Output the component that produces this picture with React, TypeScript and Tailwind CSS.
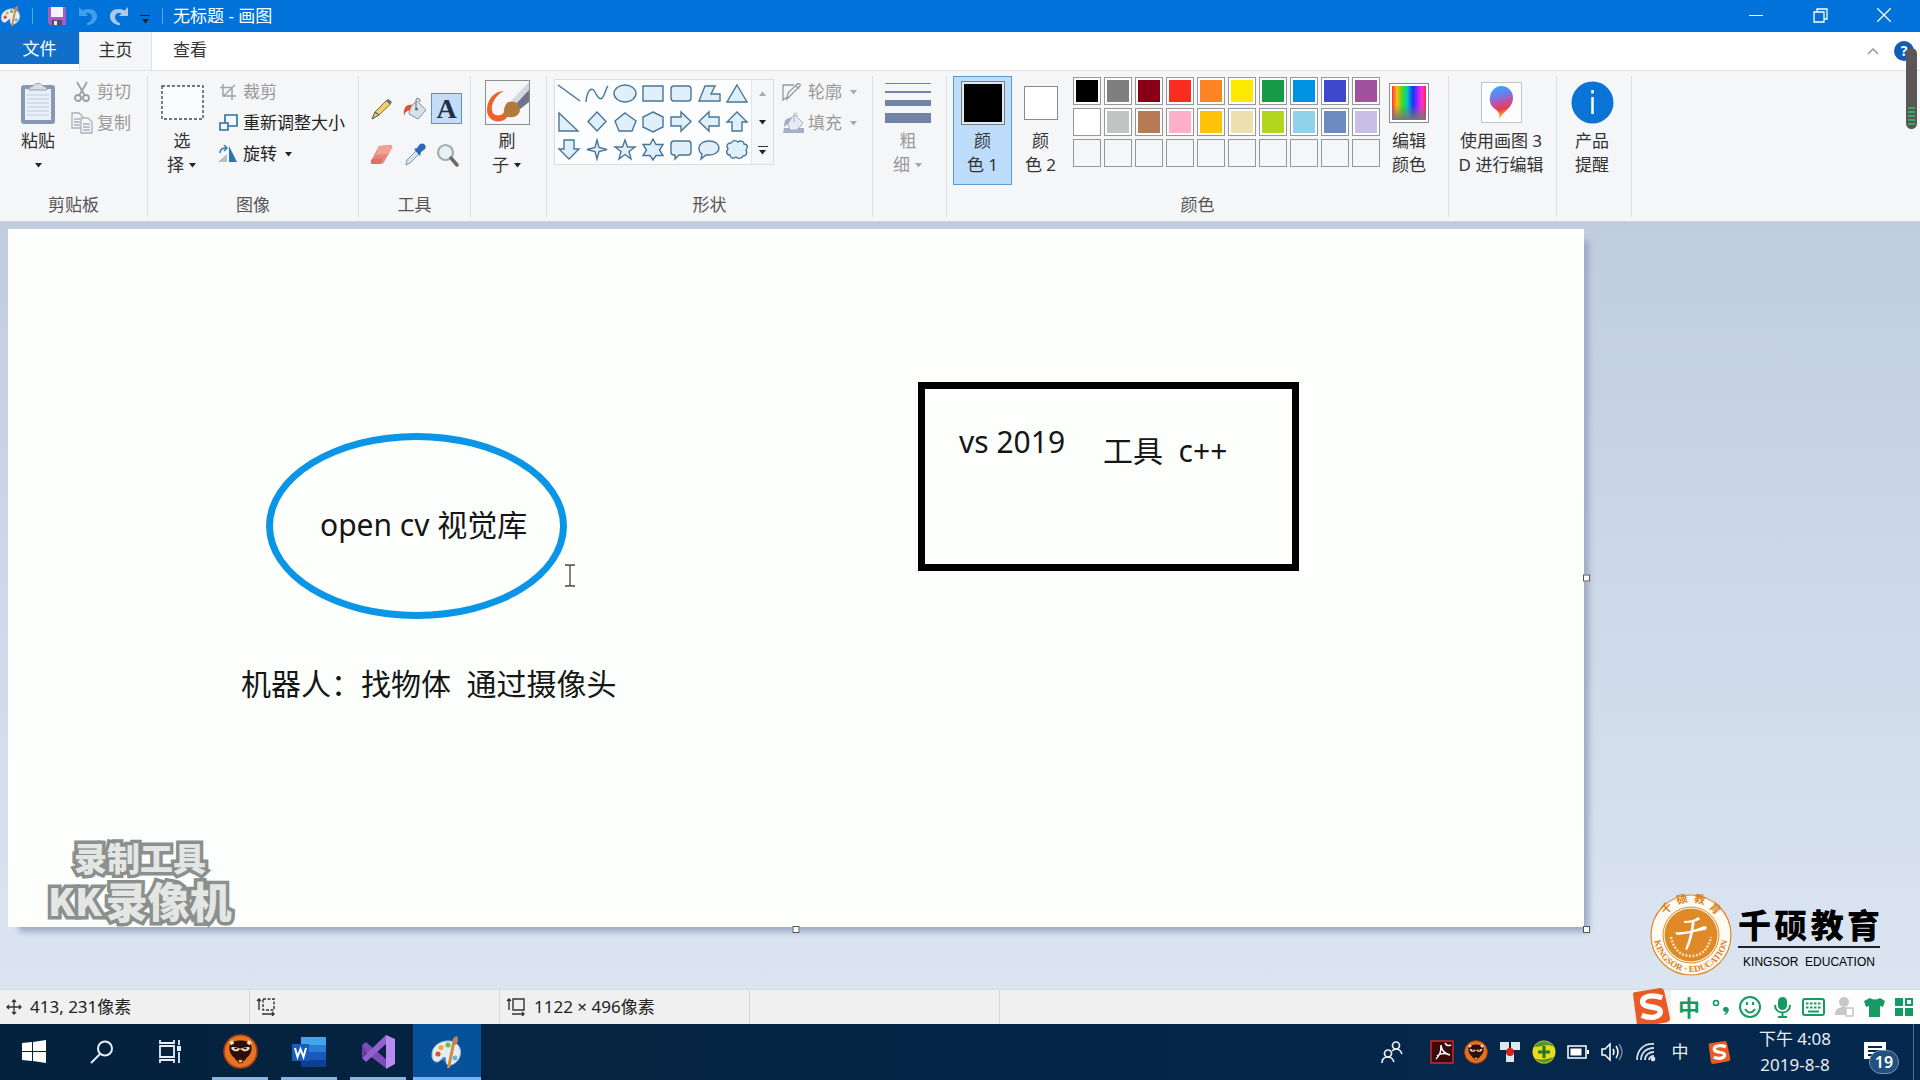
import type { ReactNode } from "react";

const PALETTE = [
  "bg-black", "bg-[#7f7f7f]", "bg-[#880015]", "bg-[#f92c20]", "bg-[#ff8426]", "bg-[#fde800]", "bg-[#169a48]", "bg-[#0092e2]", "bg-[#3f48cc]", "bg-[#a1529f]",
  "bg-white", "bg-[#c1c4c3]", "bg-[#b87a56]", "bg-[#ffb0c8]", "bg-[#ffc20a]", "bg-[#efe0b0]", "bg-[#b2d61e]", "bg-[#8fd2ea]", "bg-[#6c8cc0]", "bg-[#c8bfe7]",
];

function Caret({ light = false }: { light?: boolean }) {
  return (
    <svg width="9" height="6" viewBox="0 0 9 6" className={light ? "text-[#a9a9a9]" : "text-[#222]"} aria-hidden="true">
      <path d="M1 1h7L4.500 5.500Z" fill="currentColor" />
    </svg>
  );
}

function Group({ label, className, children }: { label?: string; className: string; children: ReactNode }) {
  return (
    <section aria-label={label} className={`flex shrink-0 flex-col border-r border-[#dcdfe3] ${className}`}>
      <div className="flex flex-1">{children}</div>
      {label && <div className="h-6 text-center leading-6 text-[#555]">{label}</div>}
    </section>
  );
}

function BigButton({ icon, lines, className, caret, muted, active }: { icon: ReactNode; lines: [string, string]; className: string; caret?: boolean; muted?: boolean; active?: boolean }) {
  return (
    <button
      type="button"
      className={`flex h-[109px] shrink-0 flex-col items-center outline-1 -outline-offset-1 ${active ? "bg-[#bddcfc] outline-[#5b9bd0]" : "outline-transparent"} ${muted ? "text-[#999]" : "text-[#333]"} ${className}`}
    >
      <span className="flex h-[53px] items-center">{icon}</span>
      <span className="h-6 leading-6 whitespace-nowrap">{lines[0]}</span>
      <span className="flex h-6 items-center gap-1 leading-6 whitespace-nowrap">
        {lines[1]}
        {caret && <Caret light={muted} />}
      </span>
    </button>
  );
}

function RowButton({ icon, label, caret, muted }: { icon: ReactNode; label: string; caret?: boolean; muted?: boolean }) {
  return (
    <button type="button" className={`flex h-[31px] items-center gap-[3px] whitespace-nowrap ${muted ? "text-[#999]" : "text-[#222]"}`}>
      <span className="flex w-6 justify-center">{icon}</span>
      {label}
      {caret && <span className="ml-1"><Caret light={muted} /></span>}
    </button>
  );
}

function PaintLogo({ size }: { size: number }) {
  return (
    <svg width={size} height={size} viewBox="0 0 34 34" aria-hidden="true">
      <path d="M2 21C1 11 11 5 20 6c9 1 12 9 10 15-2 7-9 10-12 9-3-1-1-5-4-6-3-1-4 3-7 3-3 0-5-3-5-6Z" fill="#e4eef2" stroke="#9db7c8" />
      <circle cx="8" cy="19" r="2.600" fill="#e2502f" />
      <circle cx="11" cy="12.500" r="2.600" fill="#f4a63a" />
      <circle cx="18" cy="10" r="2.500" fill="#68b949" />
      <circle cx="14" cy="24" r="2" fill="#3b7dd0" />
      <circle cx="25" cy="23" r="2.400" fill="#63b6d8" />
      <path d="M22 8 25 9 20 33 17 33Z" fill="#d58a45" />
      <path d="M22 9c0-4 1-7 5-8 2 3 1 6-1 9Z" fill="#b98561" />
    </svg>
  );
}

function SaveIcon() {
  return (
    <svg width="20" height="20" viewBox="0 0 20 20" aria-hidden="true">
      <path d="M1 1h18v18H3l-2-2Z" fill="#a35fc0" />
      <path d="M4 1h12v10H4Z" fill="#f6f2fb" />
      <path d="M5 14h10v5H5Z" fill="#5a4966" />
      <path d="M7 15h3v4H7Z" fill="#efe6f2" />
    </svg>
  );
}

function UndoIcon({ flip }: { flip?: boolean }) {
  return (
    <svg width="20" height="20" viewBox="0 0 20 20" className={flip ? "-scale-x-100" : ""} aria-hidden="true">
      <path d="M1 1v9h9L7.500 7.500c4-1.500 6.500 .5 6.500 3.500 0 3-2 5-5 6.300v2c6-.5 10-4 10-9C19 4 12 1 4.500 4.500Z" fill={flip ? "#a9cbe9" : "#3fa0ea"} />
    </svg>
  );
}

function ClipboardIcon() {
  return (
    <svg width="36" height="44" viewBox="0 0 36 44" aria-hidden="true">
      <rect x="1" y="4" width="34" height="39" rx="3" fill="#8797b4" />
      <path d="M5 8h26v31H5Z" fill="#e9f0fa" />
      <path d="M7 14h22M7 18h22M7 22h22M7 26h22M7 30h22M7 34h22" stroke="#bccbe0" strokeWidth="1.200" />
      <path d="M9 9c0-4 4-3 5-5s7-2 8 0 5 1 5 5Z" fill="#d8dde6" stroke="#98a3b4" />
    </svg>
  );
}

function ScissorsIcon() {
  return (
    <svg width="18" height="22" viewBox="0 0 18 22" fill="none" stroke="#9aa0a8" strokeWidth="1.800" aria-hidden="true">
      <path d="M4 1 11.500 14M14 1 6.500 14" />
      <circle cx="5" cy="17" r="3" />
      <circle cx="13" cy="17" r="3" />
    </svg>
  );
}

function CopyIcon() {
  return (
    <svg width="22" height="22" viewBox="0 0 22 22" fill="#f4f6f9" stroke="#a9b1bd" strokeWidth="1.300" aria-hidden="true">
      <path d="M1 1h7l4 4v11H1Z" />
      <path d="M3 7h6M3 10h6M3 13h6" />
      <path d="M10 6h7l4 4v11H10Z" />
      <path d="M12 12h7M12 15h7M12 18h7" />
    </svg>
  );
}

function CropIcon() {
  return (
    <svg width="18" height="18" viewBox="0 0 18 18" fill="none" stroke="#a3a3a3" strokeWidth="1.500" aria-hidden="true">
      <path d="M4 1v12h13M1 4.500h12V17M4.500 13 16 2" />
    </svg>
  );
}

function ResizeIcon() {
  return (
    <svg width="19" height="18" viewBox="0 0 19 18" fill="#f5f9fc" stroke="#2c6f9f" strokeWidth="1.600" aria-hidden="true">
      <path d="M6 1h12v11H6Z" />
      <path d="M1 9h8v7H1Z" />
    </svg>
  );
}

function RotateIcon() {
  return (
    <svg width="20" height="18" viewBox="0 0 20 18" aria-hidden="true">
      <path d="M11 1v16h8Z" fill="#2b78a8" />
      <path d="M9 9v8H0Z" fill="#b8bfc4" />
      <path d="M2 8c0-4 3-5 6-5M6 0l3 3-3 3" fill="none" stroke="#2f7ebb" strokeWidth="1.500" />
    </svg>
  );
}

function PencilIcon() {
  return (
    <svg width="24" height="24" viewBox="0 0 24 24" aria-hidden="true">
      <path d="M5 15 17 3l4 3.500L9 18Z" fill="#eed36a" stroke="#7d6a34" />
      <path d="m5 15-3 7 7-4Z" fill="#d9c6a4" stroke="#59503f" />
      <path d="m16 4 2-2 4 3-2 2.500Z" fill="#6c6c6c" />
    </svg>
  );
}

function BucketIcon() {
  return (
    <svg width="26" height="24" viewBox="0 0 26 24" aria-hidden="true">
      <path d="M8 10 15 4l9 9-8 9-9-5Z" fill="#d5e2ea" stroke="#7f93a2" />
      <path d="M14 12V4c0-4 4-3 4 1" fill="none" stroke="#7c8790" strokeWidth="1.200" />
      <circle cx="14.500" cy="12" r="1.500" fill="#667" />
      <path d="M10 8C4 7 1 11 2 19c1-4 3-5 6-6Z" fill="#e0512f" />
    </svg>
  );
}

function EraserIcon() {
  return (
    <svg width="25" height="22" viewBox="0 0 25 22" aria-hidden="true">
      <path d="M10 2 22 1q2 1 1 3L15 18q-1 2-3 2H3q-2-1-1-3Z" fill="#e98478" />
      <path d="M10 2 22 1q2 1 1 3l-4 6-12 1Z" fill="#f2a196" />
      <path d="M3 15 14 14l-3 6H3q-2-1-1-3Z" fill="#df6f63" />
    </svg>
  );
}

function DropperIcon() {
  return (
    <svg width="24" height="24" viewBox="0 0 24 24" aria-hidden="true">
      <path d="m3 22 1-5 9-9 3 3-9 9Z" fill="#d6e4ee" stroke="#8398a8" />
      <path d="m11 6 3-1 3-4c4-2 7 2 5 5l-4 3-1 4Z" fill="#2a68b5" />
    </svg>
  );
}

function ZoomIcon() {
  return (
    <svg width="24" height="24" viewBox="0 0 24 24" aria-hidden="true">
      <circle cx="9.500" cy="9.500" r="7.500" fill="#e7f0f5" stroke="#a3abb0" strokeWidth="2.200" />
      <path d="m15 15 6 7" stroke="#6f6a66" strokeWidth="3.500" strokeLinecap="round" />
    </svg>
  );
}

function BrushIcon() {
  return (
    <svg width="45" height="45" viewBox="0 0 45 45" aria-hidden="true">
      <rect x="0.500" y="0.500" width="44" height="44" fill="#f5f7f8" stroke="#8d8d8d" />
      <path d="M19 11C9 11 2 20 2 30c0 8 7 13 14 11 5-1 7-4 7-8l-3-2c-2 4-7 6-11 3-5-4-1-18 10-23Z" fill="#ee6127" />
      <path d="M44 4v18L34 30l-7-8Z" fill="#6d7390" />
      <path d="M44 2v8L30 25l-4-4Z" fill="#d3d7e0" />
      <path d="M22 23c5-4 13 0 13 6s-5 9-11 8c-4 0-6-3-5-6 0-3 1-6 3-8Z" fill="#b27a3a" />
    </svg>
  );
}

const SHAPES: string[] = [
  "M2 3 24 19",
  "M2 20C3 8 8 4 11 10s6 10 9 3 2-7 4-9",
  "M13 3c6 0 11 4 11 8.500S19 20 13 20 2 16 2 11.500 7 3 13 3Z",
  "M3 4h20v15H3Z",
  "M6 4h14q3 0 3 3v9q0 3-3 3H6q-3 0-3-3V7q0-3 3-3Z",
  "M3 19 9 4h10l-4 8h9v7Z",
  "M13 3 23 20H3Z",
  "M3 3 22 21H3Z",
  "M13 2 22 11.500 13 21 4 11.500Z",
  "M13 3 24 11l-4 10H7L3 11Z",
  "M13 2 23 7v10l-10 5-10-5V7Z",
  "M3 7h10V2l10 9.500L13 21v-5H3Z",
  "M23 7H13V2L3 11.500 13 21v-5h10Z",
  "M8 21V12H3L13 2l10 10h-5v9Z",
  "M8 2v9H3l10 10 10-10h-5V2Z",
  "M13 2l2 7.500 8 2-8 2L13 21l-2-7.500-8-2 8-2Z",
  "M13 2l2.500 7H23l-6 4.500 2 7.500-6-4.500L7 21l2-7.500L3 9h7.500Z",
  "M13 1l3 5.500h7L19.500 12l3.500 5.500h-7L13 22l-3-4.500H3L6.500 12 3 6.500h7Z",
  "M6 3h14q3 0 3 3v8q0 3-3 3H11l-4 4v-4H6q-3 0-3-3V6q0-3 3-3Z",
  "M13 3c6 0 10 3 10 7s-4 7-10 7H10l-5 4 1-5c-2-1-3-3-3-6 0-4 4-7 10-7Z",
  "M7 5c2-4 6-2 7-1 2-2 6-1 6 2 4 0 4 4 2 6 2 3 0 6-3 6-1 3-5 3-7 1-3 2-6 1-6-2-4 0-4-4-2-6-2-3-1-6 3-6Z",
];

function WordIcon() {
  return (
    <svg width="34" height="32" viewBox="0 0 34 32" aria-hidden="true">
      <path d="M9 1h25v8H9Z" fill="#41a5ee" />
      <path d="M9 9h25v7H9Z" fill="#2b7cd3" />
      <path d="M9 16h25v8H9Z" fill="#185abd" />
      <path d="M9 24h25v7H9Z" fill="#103f91" />
      <path d="M0 8h17v17H0Z" fill="#185abd" />
      <path d="m3 12 2.500 9L8.500 13l3 8L14 12" fill="none" stroke="#fff" strokeWidth="2" />
    </svg>
  );
}

function VisualStudioIcon() {
  return (
    <svg width="35" height="35" viewBox="0 0 35 35" aria-hidden="true">
      <path d="m1 11 4-3 21 18v9L5 19Z" fill="#7d4bb6" />
      <path d="M1 24V11l5 7Z" fill="#6b3fa3" />
      <path d="M1 24 25 1v9L5 28Z" fill="#9460cf" />
      <path d="m25 1 9 4v25l-9 5Z" fill="#b78cf0" />
    </svg>
  );
}

function RecorderFace({ size }: { size: number }) {
  return (
    <svg width={size} height={size} viewBox="0 0 34 34" aria-hidden="true">
      <circle cx="17" cy="17" r="16" fill="#e5731f" stroke="#a83f10" strokeWidth="1.500" />
      <path d="M7 10C10 5 24 5 27 10c2 5 0 10-4 13l-2 3h-8l-2-3c-4-3-6-8-4-13Z" fill="#2a1008" />
      <path d="M6 8l3-2 2 3-3 2ZM28 8l-3-2-2 3 3 2Z" fill="#f4e4d4" />
      <path d="M8 13c3-1 6 0 8 1h2c2-1 5-2 8-1 0 4-7 5-8 2h-2c-1 3-8 2-8-2Z" fill="#f4d9bd" />
      <path d="M11 14h3M20 14h3" stroke="#2a1008" strokeWidth="1.500" />
      <path d="M15 25h4v3h-4Z" fill="#f0c7a0" stroke="#5a230c" />
    </svg>
  );
}

function SogouLogo({ size }: { size: number }) {
  return (
    <svg width={size} height={size} viewBox="0 0 40 40" aria-hidden="true">
      <path d="M1 6Q1 4 4 4L29 0Q32 0 33 3L39 31Q39 34 36 35L9 40Q6 40 5 37Z" fill="#ea5a24" />
      <path d="M31 10C19 6 10 9 11 15s18 3 18 9-10 8-19 4" fill="none" stroke="#fff" strokeWidth="5.500" />
    </svg>
  );
}

function RingLogo() {
  return (
    <svg width="82" height="82" viewBox="0 0 82 82" role="img" aria-label="Kingsor Education">
      <circle cx="41" cy="41" r="40" fill="#fffaf2" stroke="#dd8a2b" strokeWidth="1.200" />
      <circle cx="41" cy="41" r="28" fill="none" stroke="#dd8a2b" strokeWidth="1" />
      <circle cx="41" cy="41" r="26.500" fill="#df8a26" />
      <path id="ring-top" d="M11 38a30 30 0 0 1 60 0" fill="none" />
      <path id="ring-bottom" d="M4 41a37 37 0 0 0 74 0" fill="none" />
      <text fontSize="11" fontWeight="700" fill="#d98020" className="font-['Noto_Sans_CJK_SC',sans-serif]">
        <textPath href="#ring-top" startOffset="50%" textAnchor="middle" className="whitespace-pre">千  硕  教  育</textPath>
      </text>
      <text fontSize="9" fontWeight="700" fill="#d98020" className="font-['Liberation_Serif',serif]">
        <textPath href="#ring-bottom" startOffset="50%" textAnchor="middle">KINGSOR · EDUCATION</textPath>
      </text>
      <path d="M21 43c3 14 11 19 20 19s17-5 20-19" fill="none" stroke="#fbe3bf" strokeWidth="2.500" strokeDasharray="2 1.500" />
      <path d="M34 27c6 0 10-1 14-4 3 1 2 3-1 4-3 1-8 2-13 2ZM25 38c9 1 20-2 29-6 4 0 3 3 1 4-9 1-20 5-28 5ZM42 27c3 1 3 3 2 5-1 8-3 17-7 24-2 0-2-1-1-3 3-8 5-16 6-26Z" fill="#fff" />
    </svg>
  );
}

function ShapeGallery() {
  return (
    <div className="mt-[3px] flex h-[86px] border border-[#d9dde2]">
      <div className="grid grid-cols-7 bg-[#fbfdff]">
        {SHAPES.map((d, i) => (
          <button key={d} type="button" aria-label={`形状 ${i + 1}`} className="flex h-7 w-7 items-center justify-center">
            <svg width="26" height="24" viewBox="0 0 26 24" fill={i < 2 ? "none" : "#dff0fb"} stroke="#4b7596" strokeWidth="1.400" aria-hidden="true">
              <path d={d} />
            </svg>
          </button>
        ))}
      </div>
      <div className="flex w-[22px] flex-col border-l border-[#e1e4e8] text-[#444]">
        <button type="button" aria-label="向上" className="flex h-7 items-center justify-center"><span className="rotate-180"><Caret light /></span></button>
        <button type="button" aria-label="向下" className="flex h-7 items-center justify-center"><Caret /></button>
        <button type="button" aria-label="更多" className="flex h-7 flex-col items-center justify-center gap-0.5"><span className="h-px w-2.5 bg-[#333]" /><Caret /></button>
      </div>
    </div>
  );
}

function Ribbon() {
  return (
    <div className="flex h-[151px] items-stretch border-t border-[#dfe2e5] bg-[#f5f6f7] pt-[5px] pb-1">
      <Group label="剪贴板" className="w-[148px]">
        <button type="button" className="flex h-[109px] w-[76px] flex-col items-center text-[#333]">
          <span className="flex h-[53px] items-center"><ClipboardIcon /></span>
          <span className="h-6 leading-6">粘贴</span>
          <span className="flex h-6 items-center"><Caret /></span>
        </button>
        <div className="-ml-1.5">
          <RowButton muted icon={<ScissorsIcon />} label="剪切" />
          <RowButton muted icon={<CopyIcon />} label="复制" />
        </div>
      </Group>
      <Group label="图像" className="w-[211px]">
        <BigButton
          className="w-[68px]"
          lines={["选", "择"]}
          caret
          icon={<svg width="43" height="35" viewBox="0 0 43 35" aria-hidden="true"><rect x="1" y="1" width="41" height="33" fill="#fafcfd" stroke="#3c4c5a" strokeWidth="1.400" strokeDasharray="3 2" /></svg>}
        />
        <div>
          <RowButton muted icon={<CropIcon />} label="裁剪" />
          <RowButton icon={<ResizeIcon />} label="重新调整大小" />
          <RowButton icon={<RotateIcon />} label="旋转" caret />
        </div>
      </Group>
      <Group label="工具" className="w-28">
        <div className="ml-1.5 mt-[17px] grid h-[77px] grid-cols-[33px_33px_33px] content-between">
          <button type="button" aria-label="铅笔" className="flex h-[31px] items-center justify-center"><PencilIcon /></button>
          <button type="button" aria-label="填充颜色" className="flex h-[31px] items-center justify-center"><BucketIcon /></button>
          <button type="button" aria-label="文本" className="flex h-[31px] w-[31px] items-center justify-center border border-[#5a93d0] bg-[#c4dcf6] font-['Liberation_Serif',serif] text-[28px] leading-none font-bold text-[#1d3049]">A</button>
          <button type="button" aria-label="橡皮擦" className="flex h-[31px] items-center justify-center"><EraserIcon /></button>
          <button type="button" aria-label="颜色选取器" className="flex h-[31px] items-center justify-center"><DropperIcon /></button>
          <button type="button" aria-label="放大镜" className="flex h-[31px] items-center justify-center"><ZoomIcon /></button>
        </div>
      </Group>
      <Group className="w-[76px]">
        <BigButton className="w-[72px]" lines={["刷", "子"]} caret icon={<BrushIcon />} />
      </Group>
      <Group label="形状" className="w-[326px]">
        <div className="flex gap-[7px] pl-[7px]">
          <ShapeGallery />
          <div>
            <RowButton muted caret label="轮廓" icon={<svg width="22" height="20" viewBox="0 0 22 20" fill="none" stroke="#989898" strokeWidth="1.300" aria-hidden="true"><path d="M12 3H1v15L5 15M18 4 9 13l-4 4 1-6 9-9q4-1 3 2M14 4l3 3" /></svg>} />
            <RowButton muted caret label="填充" icon={<svg width="23" height="22" viewBox="0 0 23 22" aria-hidden="true"><path d="M2 16h20v5H1Z" fill="#a3afc4" /><path d="M5 9 13 3l8 8-6 7H8Z" fill="#e6ebf2" stroke="#a6b1c3" /><path d="M12 10V3c0-3 3-3 3 1" fill="none" stroke="#a6b1c3" /><path d="M10 6C4 5 2 9 2 15l5-4Z" fill="#a3afc4" /></svg>} />
          </div>
        </div>
      </Group>
      <Group className="w-[74px]">
        <BigButton
          muted
          caret
          className="w-[70px]"
          lines={["粗", "细"]}
          icon={
            <span className="flex w-[46px] flex-col gap-[7px]">
              <span className="h-px bg-[#7283a6]" />
              <span className="h-[2px] bg-[#7283a6]" />
              <span className="h-[6px] bg-[#7283a6]" />
              <span className="h-[10px] bg-[#7283a6]" />
            </span>
          }
        />
      </Group>
      <Group label="颜色" className="w-[502px]">
        <BigButton active className="ml-1.5 w-[59px]" lines={["颜", "色 1"]} icon={<span className="block size-[44px] border border-[#7c7c7c] bg-black outline-2 -outline-offset-3 outline-[#dfe9f3]" />} />
        <BigButton className="w-[57px]" lines={["颜", "色 2"]} icon={<span className="block size-[34px] border border-[#8a8a8a] bg-white" />} />
        <div className="mt-px ml-1 grid h-[90px] grid-cols-10 gap-[3px]">
          {Array.from({ length: 30 }, (_, i) => (
            <button key={i} type="button" aria-label={`颜色 ${i + 1}`} className={`size-7 border border-[#979797] ${i < 20 ? "bg-white p-0.5" : "bg-[#f5f6f7]"}`}>
              {i < 20 && <span className={`block size-full ${PALETTE[i]}`} />}
            </button>
          ))}
        </div>
        <BigButton
          className="ml-0.5 w-[54px]"
          lines={["编辑", "颜色"]}
          icon={<span className="block size-10 border border-[#8a8a8a] bg-white p-0.5"><span className="block size-full bg-[linear-gradient(to_bottom,transparent_55%,#777_100%),linear-gradient(to_right,#f33_0%,#fb1_14%,#3d2_32%,#0cb_44%,#13f_62%,#a2f_76%,#f3c_88%,#f24_100%)]" /></span>}
        />
      </Group>
      <Group className="w-[108px]">
        <BigButton
          className="w-[104px]"
          lines={["使用画图 3", "D 进行编辑"]}
          icon={
            <svg width="41" height="41" viewBox="0 0 41 41" aria-hidden="true">
              <defs>
                <linearGradient id="drop" x1="0" y1="0" x2="0.200" y2="1">
                  <stop offset="0" stopColor="#27b5f2" /><stop offset="0.350" stopColor="#6b7df0" /><stop offset="0.600" stopColor="#c94b9c" /><stop offset="0.780" stopColor="#ec3e43" /><stop offset="1" stopColor="#ffc02a" />
                </linearGradient>
              </defs>
              <rect x="0.500" y="0.500" width="40" height="40" fill="#fdfdfd" stroke="#c4c4c4" />
              <path d="M20 4c8 0 12 6 12 12 0 9-8 12-14 21 1-5 0-7-4-10-4-3-6-7-5-12 1-7 6-11 11-11Z" fill="url(#drop)" />
            </svg>
          }
        />
      </Group>
      <Group className="w-[75px]">
        <BigButton
          className="w-[70px]"
          lines={["产品", "提醒"]}
          icon={<svg width="43" height="43" viewBox="0 0 43 43" aria-hidden="true"><circle cx="21.500" cy="21.500" r="21" fill="#0a74d6" /><path d="M21.500 16v17M21.500 9v3.500" stroke="#fff" strokeWidth="2.500" /></svg>}
        />
      </Group>
    </div>
  );
}

function CanvasText({ className, children }: { className: string; children: ReactNode }) {
  return <p className={`absolute text-[30px] leading-10 whitespace-pre text-[#161616] ${className}`}>{children}</p>;
}

function Handle({ className }: { className: string }) {
  return <span className={`absolute size-[7px] border border-[#555] bg-white ${className}`} />;
}

function Workspace() {
  return (
    <main className="flex flex-1 bg-linear-to-b from-[#c0cddf] to-[#dbe5f2] pt-[7px] pl-2">
      <div className="mb-[62px] flex flex-1">
        <div className="relative min-h-[600px] flex-1 bg-[#fdfffd] shadow-[8px_8px_6px_-3px_#9fabc6]">
          <div className="absolute top-[204px] left-[258px] h-[186px] w-[301px] rounded-[50%] border-7 border-[#0a95e6]" />
          <CanvasText className="top-[276px] left-[312px]">open cv 视觉库</CanvasText>
          <CanvasText className="top-[435px] left-[233px]">机器人：找物体  通过摄像头</CanvasText>
          <div className="absolute top-[153px] left-[910px] h-[189px] w-[381px] border-7 border-black" />
          <CanvasText className="top-[193px] left-[951px]">vs 2019</CanvasText>
          <CanvasText className="top-[202px] left-[1095px]">工具  c++</CanvasText>
          <svg className="absolute top-[335px] left-[557px]" width="10" height="23" viewBox="0 0 10 23" fill="none" stroke="#444" strokeWidth="1.300" aria-hidden="true">
            <path d="M0 1h4l1 1 1-1h4M0 22h4l1-1 1 1h4M5 2v19" />
          </svg>
          <div className="absolute bottom-0.5 left-[40px] flex flex-col items-center font-['Noto_Sans_CJK_SC',sans-serif] font-black text-[#e4e6e4] [-webkit-text-stroke:7px_#8b8f8d] [paint-order:stroke]">
            <span className="text-[33px] leading-9">录制工具</span>
            <span className="flex items-center gap-1 text-[42px] leading-[50px]"><span className="text-[38px]">KK</span>录像机</span>
          </div>
          <Handle className="top-1/2 -right-1.5 -translate-y-1/2" />
          <Handle className="-bottom-1.5 left-1/2 -translate-x-1/2" />
          <Handle className="-right-1.5 -bottom-1.5" />
        </div>
      </div>
      <aside className="flex w-[336px] shrink-0 items-end gap-1.5 pb-[13px] pl-[66px]">
        <RingLogo />
        <div className="mb-1 flex w-[142px] flex-col items-center text-black">
          <div className="flex w-full justify-between border-b-2 border-[#222] text-[33px] leading-10 font-black">
            <span>千</span><span>硕</span><span>教</span><span>育</span>
          </div>
          <div className="pt-1 font-['Liberation_Sans',sans-serif] text-xs leading-5 whitespace-pre">KINGSOR  EDUCATION</div>
        </div>
      </aside>
    </main>
  );
}

function StatusBar() {
  return (
    <footer className="flex h-[35px] items-stretch border-t border-[#d2dbe8] bg-[#f0f0f0] text-[#222]">
      <div className="flex w-[250px] items-center gap-2 border-r border-[#d7d7d7] pl-1.5">
        <svg width="16" height="16" viewBox="0 0 16 16" fill="none" stroke="#333" strokeWidth="1.300" aria-hidden="true"><path d="M8 1v14M1 8h14M6 3l2-2 2 2M6 13l2 2 2-2M3 6 1 8l2 2M13 6l2 2-2 2" /></svg>
        413, 231像素
      </div>
      <div className="flex w-[250px] items-center border-r border-[#d7d7d7] pl-1.5">
        <svg width="20" height="18" viewBox="0 0 20 18" fill="none" stroke="#333" strokeWidth="1.400" aria-hidden="true"><path d="M3 1v11M1 3l2-2 2 2M6 16h12M16 14l2 2-2 2" /><path d="M7 1h11v11H7Z" strokeDasharray="3 1.500" /></svg>
      </div>
      <div className="flex w-[250px] items-center gap-2 border-r border-[#d7d7d7] pl-1.5">
        <svg width="20" height="18" viewBox="0 0 20 18" fill="none" stroke="#333" strokeWidth="1.400" aria-hidden="true"><path d="M3 1v11M1 3l2-2 2 2M6 16h12M16 14l2 2-2 2" /><path d="M7 1h11v11H7Z" /></svg>
        1122 × 496像素
      </div>
      <div className="w-[250px] border-r border-[#d7d7d7]" />
      <div className="ml-auto flex items-center">
        <SogouLogo size={39} />
        <div className="flex h-full items-center bg-[#fdfefd] pr-0.5 text-[#159a63]">
          <span className="w-9 text-center text-[22px] leading-6 font-bold">中</span>
          <svg width="29" height="24" viewBox="0 0 29 24" aria-hidden="true"><circle cx="9" cy="8" r="2.500" fill="none" stroke="currentColor" strokeWidth="1.600" /><path d="M16 14a3 3 0 1 1 5 3c-1 2-2 3-4 3l2-3c-2 0-3-1-3-3Z" fill="currentColor" /></svg>
          <svg width="30" height="24" viewBox="0 0 30 24" fill="none" stroke="currentColor" strokeWidth="2" aria-hidden="true"><circle cx="14" cy="12" r="10" /><path d="M11 7v3M17 7v3M9 14q5 7 10 0" /></svg>
          <svg width="32" height="24" viewBox="0 0 32 24" aria-hidden="true"><rect x="12" y="2" width="9" height="13" rx="4.500" fill="currentColor" /><path d="M9 10c0 10 15 10 15 0M16.500 18v4M12 22h9" fill="none" stroke="currentColor" strokeWidth="2" /></svg>
          <svg width="31" height="24" viewBox="0 0 31 24" aria-hidden="true"><rect x="5" y="4" width="21" height="16" rx="2" fill="none" stroke="currentColor" strokeWidth="2" /><path d="M8 8.500h16M8 12.500h16" stroke="currentColor" strokeWidth="2.200" strokeDasharray="2.500 1.500" /><path d="M10 16.500h11" stroke="currentColor" strokeWidth="2" /></svg>
          <svg width="30" height="24" viewBox="0 0 30 24" aria-hidden="true"><circle cx="15" cy="7" r="5" fill="#c4c8c6" /><path d="M6 20c0-6 4-8 9-8s8 3 8 8Z" fill="#c4c8c6" /><path d="M17 13h7v8h-7Z" fill="#fff" stroke="#c4c8c6" strokeWidth="1.500" /></svg>
          <svg width="31" height="24" viewBox="0 0 31 24" fill="currentColor" aria-hidden="true"><path d="M11 3q5 3 10 0l5 3-2 6-3-1v11H10V11l-3 1-2-6Z" /></svg>
          <svg width="28" height="24" viewBox="0 0 28 24" aria-hidden="true"><path d="M5 3h8v8H5ZM5 13h8v8H5ZM15 13h8v8h-8Z" fill="currentColor" /><path d="M16 4h6v6h-6Z" fill="none" stroke="currentColor" strokeWidth="2" /></svg>
        </div>
      </div>
    </footer>
  );
}

function TaskButton({ label, open, active, children }: { label: string; open?: boolean; active?: boolean; children: ReactNode }) {
  return (
    <button type="button" aria-label={label} className={`flex w-[68px] flex-col items-center ${active ? "bg-[#07509a]" : ""}`}>
      <span className="flex flex-1 items-center pt-0.5">{children}</span>
      <span className={`h-[3px] ${active ? "w-full bg-[#74b6f3]" : open ? "w-14 bg-[#8db4dd]" : "w-14"}`} />
    </button>
  );
}

function TrayItem({ label, children }: { label: string; children: ReactNode }) {
  return <button type="button" aria-label={label} className="flex w-[34px] items-center justify-center">{children}</button>;
}

function Taskbar() {
  return (
    <nav aria-label="任务栏" className="flex h-14 items-stretch bg-linear-to-r from-[#04223d] to-[#05284e] text-[#e8eef5]">
      <TaskButton label="开始"><svg width="24" height="23" viewBox="0 0 24 23" fill="#fff" aria-hidden="true"><path d="M0 3 10 2v9H0ZM11 2l13-2v11H11ZM0 12h10v9L0 20ZM11 12h13v11l-13-2Z" /></svg></TaskButton>
      <TaskButton label="搜索"><svg width="24" height="24" viewBox="0 0 24 24" fill="none" stroke="#e8eef5" strokeWidth="2" aria-hidden="true"><circle cx="15" cy="8.500" r="7" /><path d="M10 14 1 23" /></svg></TaskButton>
      <TaskButton label="任务视图"><svg width="24" height="23" viewBox="0 0 24 23" fill="none" stroke="#e8eef5" strokeWidth="1.800" aria-hidden="true"><path d="M2 6h14v11H2ZM2 0v3h14V0M2 23v-3h14v3M21 0v5M21 12v11" /><path d="M19 6h4v5h-4Z" fill="#e8eef5" stroke="none" /></svg></TaskButton>
      <div className="ml-0.5 flex gap-px">
        <TaskButton label="KK录像机" open><RecorderFace size={35} /></TaskButton>
        <TaskButton label="Word" open><WordIcon /></TaskButton>
        <TaskButton label="Visual Studio" open><VisualStudioIcon /></TaskButton>
        <TaskButton label="画图" active><PaintLogo size={34} /></TaskButton>
      </div>
      <div className="ml-auto flex items-stretch pr-1.5">
        <button type="button" aria-label="人脉" className="flex w-[67px] items-center justify-center">
          <svg width="22" height="22" viewBox="0 0 22 22" fill="none" stroke="#e8eef5" strokeWidth="1.700" aria-hidden="true"><circle cx="15" cy="4.500" r="3.500" /><circle cx="7" cy="12.500" r="3.500" /><path d="M1 22c0-4 2-6 6-6s5 2 6 5M11 10c1-1 2-2 4-2 4 0 5 2 6 5" /></svg>
        </button>
        <TrayItem label="Adobe"><svg width="24" height="24" viewBox="0 0 24 24" fill="none" aria-hidden="true"><rect x="1" y="1" width="22" height="22" fill="#3a0b0b" stroke="#d02a2a" strokeWidth="1.500" /><path d="M11 5c0 7-1 10-5 14M11 6c1 5 4 8 9 9M7 16c3-3 6-3 11-2M15 3c2 3 3 3 6 2" stroke="#fff" strokeWidth="1.500" /></svg></TrayItem>
        <TrayItem label="录像"><RecorderFace size={24} /></TrayItem>
        <TrayItem label="连接"><svg width="22" height="22" viewBox="0 0 22 22" aria-hidden="true"><path d="M1 1h9v8H1ZM12 1h9v8h-9ZM7 12h8v9H7Z" fill="#dfe6ec" /><circle cx="11" cy="11" r="4" fill="#d82222" /></svg></TrayItem>
        <TrayItem label="安全"><svg width="24" height="24" viewBox="0 0 24 24" aria-hidden="true"><circle cx="12" cy="12" r="11.500" fill="#e8da1e" /><path d="M2 7C6 0 17-1 22 7c-6-4-13 0-20 0ZM22 17c-4 7-14 8-20 1 7 3 13 1 20-1Z" fill="#4c9a2a" /><path d="M12 6v12M6 12h12" stroke="#227326" strokeWidth="3" /></svg></TrayItem>
        <TrayItem label="电池"><svg width="22" height="14" viewBox="0 0 22 14" aria-hidden="true"><path d="M1 1h18v12H1Z" fill="none" stroke="#fff" strokeWidth="1.500" /><path d="M3.500 3.500h11v7h-11ZM20 5h2v4h-2Z" fill="#fff" /></svg></TrayItem>
        <TrayItem label="音量"><svg width="23" height="20" viewBox="0 0 23 20" fill="none" stroke="#fff" strokeWidth="1.500" aria-hidden="true"><path d="M1 7h3l5-5v16l-5-5H1ZM12 7q2 3 0 6M15 4q4 6 0 12" /><path d="M18 2q6 8 0 16" stroke="#73869c" /></svg></TrayItem>
        <TrayItem label="网络"><svg width="20" height="20" viewBox="0 0 20 20" fill="none" stroke="#d6dfe8" strokeWidth="1.800" aria-hidden="true"><path d="M1 18C1 8 8 1 18 2M5 18C5 11 10 6 18 6M9 18c0-5 4-8 9-8M13 18c0-2 2-4 5-4" /><circle cx="17" cy="17" r="1.500" fill="#fff" /></svg></TrayItem>
        <TrayItem label="输入法">中</TrayItem>
        <button type="button" aria-label="搜狗" className="flex w-11 items-center justify-center"><SogouLogo size={23} /></button>
        <button type="button" className="w-[108px] text-center leading-[26px]">
          <span className="block">下午 4:08</span>
          <span className="block">2019-8-8</span>
        </button>
        <button type="button" aria-label="通知 19" className="relative flex w-[65px] items-center border-r border-[#52708d] pl-[14px]">
          <svg width="24" height="22" viewBox="0 0 24 22" aria-hidden="true"><path d="M1 1h22v17H11l-4 4v-4H1Z" fill="#fff" /><path d="M5 6h14M5 10h14M5 14h9" stroke="#05284e" strokeWidth="1.800" /></svg>
          <span className="absolute top-[26px] left-5 flex h-6 w-[30px] items-center justify-center rounded-full border border-[#6f93b8] bg-[#23517f] text-base font-semibold text-white">19</span>
        </button>
      </div>
    </nav>
  );
}

export default function App() {
  return (
    <div className="relative flex min-h-screen flex-col overflow-x-hidden bg-white font-['Noto_Sans','Noto_Sans_CJK_SC',sans-serif] text-[17px]">
      <header className="flex h-8 items-center bg-[#0072da] text-white">
        <div className="flex items-center">
          <PaintLogo size={22} />
          <span className="ml-2.5 h-4 w-px bg-[#5aa5ea]" />
          <div className="ml-3.5 flex items-center gap-[11px]">
            <button type="button" aria-label="保存"><SaveIcon /></button>
            <button type="button" aria-label="撤消"><UndoIcon /></button>
            <button type="button" aria-label="重做"><UndoIcon flip /></button>
            <button type="button" aria-label="自定义" className="flex flex-col items-center gap-0.5 pt-1.5"><span className="h-px w-2.5 bg-[#0b2238]" /><Caret /></button>
          </div>
          <span className="ml-3 h-4 w-px bg-[#5aa5ea]" />
        </div>
        <h1 className="ml-2.5 flex-1 leading-8">无标题 - 画图</h1>
        <div className="flex pr-1 pb-0.5">
          <button type="button" aria-label="最小化" className="flex h-7 w-16 items-center justify-center"><span className="h-px w-3.5 bg-white" /></button>
          <button type="button" aria-label="还原" className="flex h-7 w-16 items-center justify-center"><svg width="15" height="15" viewBox="0 0 15 15" fill="none" stroke="#fff" strokeWidth="1.300" aria-hidden="true"><path d="M1 4h10v10H1ZM4 4V1h10v10h-3" /></svg></button>
          <button type="button" aria-label="关闭" className="flex h-7 w-16 items-center justify-center"><svg width="14" height="14" viewBox="0 0 14 14" stroke="#fff" strokeWidth="1.300" aria-hidden="true"><path d="m0 0 14 14M14 0 0 14" /></svg></button>
        </div>
      </header>
      <div className="flex h-[38px] items-start bg-[#fdfefd] text-[#333]">
        <button type="button" className="h-8 w-[79px] bg-[#0f6fc9] pt-0.5 text-white">文件</button>
        <button type="button" className="-mb-px h-[39px] w-[73px] border-x border-[#dfe2e5] bg-[#f5f6f7] pb-1">主页</button>
        <button type="button" className="h-9 w-[76px]">查看</button>
        <div className="ml-auto flex h-[38px] items-center gap-[15px] pr-1.5">
          <button type="button" aria-label="折叠功能区"><svg width="12" height="7" viewBox="0 0 12 7" fill="none" stroke="#999" strokeWidth="1.500" aria-hidden="true"><path d="m1 6 5-5 5 5" /></svg></button>
          <button type="button" aria-label="帮助" className="size-5 rounded-full bg-[#0f5fb4] text-sm leading-5 font-bold text-white">?</button>
        </div>
      </div>
      <Ribbon />
      <div className="h-px bg-[#cfd2d6]" />
      <Workspace />
      <StatusBar />
      <Taskbar />
      <div className="absolute top-12 right-[3px] flex h-[81px] w-[11px] flex-col justify-end rounded-full bg-[#5b5757] p-0.5">
        <div className="h-5 rounded-b-full bg-[repeating-linear-gradient(to_bottom,#3fa866_0_2px,#4d5a52_2px_4px)]" />
      </div>
    </div>
  );
}
